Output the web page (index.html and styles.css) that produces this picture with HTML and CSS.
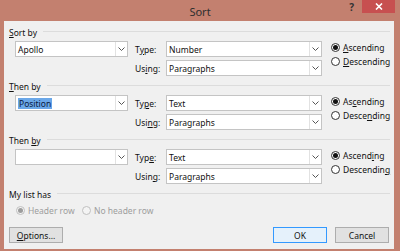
FILE: index.html
```html
<!DOCTYPE html>
<html lang="en">
<head>
    <meta charset="UTF-8">
    <title>Sort</title>
    <link rel="stylesheet" href="styles.css">
</head>
<body>
    <div class="window">
        <div class="titlebar">
            <span class="title">Sort</span>
            <div class="controls">
                <span class="help">?</span>
                <span class="close">
                    <svg width="8" height="7" viewBox="0 0 8 7"><path d="M1 0.5 L7 6.5 M7 0.5 L1 6.5" stroke="#fff" stroke-width="1.6"/></svg>
                </span>
            </div>
        </div>
        <div class="client">
            <div class="group">
                <div class="legend"><span><u>S</u>ort by</span></div>
                <div class="fields">
                    <div class="combo key"><span class="value">Apollo</span><span class="arrow"><svg width="7" height="4" viewBox="0 0 7 4"><path d="M0.5 0.5 L3.5 3.5 L6.5 0.5" fill="none" stroke="#555"/></svg></span></div>
                    <span class="label">T<u>y</u>pe:</span>
                    <div class="combo field"><span class="value">Number</span><span class="arrow"><svg width="7" height="4" viewBox="0 0 7 4"><path d="M0.5 0.5 L3.5 3.5 L6.5 0.5" fill="none" stroke="#555"/></svg></span></div>
                    <span class="label">Us<u>i</u>ng:</span>
                    <div class="combo field"><span class="value">Paragraphs</span><span class="arrow"><svg width="7" height="4" viewBox="0 0 7 4"><path d="M0.5 0.5 L3.5 3.5 L6.5 0.5" fill="none" stroke="#555"/></svg></span></div>
                    <div class="direction">
                        <label class="radio"><span class="dot on"></span><span><u>A</u>scending</span></label>
                        <label class="radio"><span class="dot"></span><span><u>D</u>escending</span></label>
                    </div>
                </div>
            </div>
            <div class="group">
                <div class="legend"><span><u>T</u>hen by</span></div>
                <div class="fields">
                    <div class="combo key"><span class="value"><span class="selected">Position</span></span><span class="arrow"><svg width="7" height="4" viewBox="0 0 7 4"><path d="M0.5 0.5 L3.5 3.5 L6.5 0.5" fill="none" stroke="#555"/></svg></span></div>
                    <span class="label">Ty<u>p</u>e:</span>
                    <div class="combo field"><span class="value">Text</span><span class="arrow"><svg width="7" height="4" viewBox="0 0 7 4"><path d="M0.5 0.5 L3.5 3.5 L6.5 0.5" fill="none" stroke="#555"/></svg></span></div>
                    <span class="label">Usi<u>n</u>g:</span>
                    <div class="combo field"><span class="value">Paragraphs</span><span class="arrow"><svg width="7" height="4" viewBox="0 0 7 4"><path d="M0.5 0.5 L3.5 3.5 L6.5 0.5" fill="none" stroke="#555"/></svg></span></div>
                    <div class="direction">
                        <label class="radio"><span class="dot on"></span><span>As<u>c</u>ending</span></label>
                        <label class="radio"><span class="dot"></span><span>Desce<u>n</u>ding</span></label>
                    </div>
                </div>
            </div>
            <div class="group">
                <div class="legend"><span>Then <u>b</u>y</span></div>
                <div class="fields">
                    <div class="combo key"><span class="value"></span><span class="arrow"><svg width="7" height="4" viewBox="0 0 7 4"><path d="M0.5 0.5 L3.5 3.5 L6.5 0.5" fill="none" stroke="#555"/></svg></span></div>
                    <span class="label">Typ<u>e</u>:</span>
                    <div class="combo field"><span class="value">Text</span><span class="arrow"><svg width="7" height="4" viewBox="0 0 7 4"><path d="M0.5 0.5 L3.5 3.5 L6.5 0.5" fill="none" stroke="#555"/></svg></span></div>
                    <span class="label">Usin<u>g</u>:</span>
                    <div class="combo field"><span class="value">Paragraphs</span><span class="arrow"><svg width="7" height="4" viewBox="0 0 7 4"><path d="M0.5 0.5 L3.5 3.5 L6.5 0.5" fill="none" stroke="#555"/></svg></span></div>
                    <div class="direction">
                        <label class="radio"><span class="dot on"></span><span>Ascend<u>i</u>ng</span></label>
                        <label class="radio"><span class="dot"></span><span>Descendin<u>g</u></span></label>
                    </div>
                </div>
            </div>
            <div class="group">
                <div class="legend"><span>My list has</span></div>
                <div class="header-opts">
                    <label class="radio disabled first"><span class="dot on"></span><span>Header row</span></label>
                    <label class="radio disabled"><span class="dot"></span><span>No header row</span></label>
                </div>
            </div>
            <div class="footer">
                <button class="btn"><u>O</u>ptions...</button>
                <span class="spacer"></span>
                <button class="btn default">OK</button>
                <button class="btn">Cancel</button>
            </div>
        </div>
    </div>
</body>
</html>
```

FILE: styles.css
```css
body {
    margin: 0;
    font-family: "Noto Sans", sans-serif;
    font-size: 8.5px;
    color: #111;
}
u {
    text-decoration-thickness: 1px;
    text-underline-offset: 1px;
}
.window {
    width: 400px;
    height: 251px;
    background-color: #c3806f;
    display: flex;
    flex-direction: column;
}
.titlebar {
    height: 21px;
    display: grid;
    grid-template-columns: 1fr auto 1fr;
    align-items: start;
}
.title {
    grid-column: 2;
    font-size: 11px;
    line-height: 23px;
    color: #2e2e2e;
}
.controls {
    grid-column: 3;
    justify-self: end;
    display: flex;
    margin-right: 5px;
}
.help {
    font-size: 10px;
    font-weight: bold;
    line-height: 14px;
    color: #333;
    margin-right: 8px;
}
.close {
    width: 33px;
    height: 13px;
    background-color: #c75050;
    display: flex;
    align-items: center;
    justify-content: center;
}
.client {
    flex: 1;
    margin: 0 6px 2px 4px;
    background-color: #f0f0f0;
    padding: 4px 4px 6px 5px;
    display: flex;
    flex-direction: column;
}
.group + .group {
    margin-top: 3px;
}
.legend {
    display: flex;
    align-items: center;
    height: 14px;
    margin-bottom: 2px;
}
.legend::after {
    content: "";
    flex: 1;
    border-top: 1px solid #dcdcdc;
    margin: -2px 0 0 6px;
}
.fields {
    display: grid;
    grid-template-columns: 113px 38px 156px auto;
    grid-template-rows: 16px 16px;
    row-gap: 3px;
    padding-left: 6px;
}
.combo {
    box-sizing: border-box;
    border: 1px solid #c4c4c4;
    background-color: #fff;
    display: flex;
    align-items: center;
}
.combo.key {
    grid-column: 1;
    grid-row: 1;
}
.combo.field {
    grid-column: 3;
}
.value {
    flex: 1;
    padding-left: 2px;
    white-space: nowrap;
    overflow: hidden;
}
.selected {
    background-color: #6aa7e8;
    color: #0a1a40;
    padding: 0 1px;
}
.arrow {
    width: 11px;
    align-self: stretch;
    border-left: 1px solid #e2e2e2;
    display: flex;
    align-items: center;
    justify-content: center;
}
.label {
    grid-column: 2;
    padding-left: 7px;
    display: flex;
    align-items: center;
}
.direction {
    grid-column: 4;
    grid-row: 1 / span 2;
    margin: -1px 0 0 9px;
    display: flex;
    flex-direction: column;
}
.radio {
    display: flex;
    align-items: center;
    gap: 3px;
    height: 14px;
}
.dot {
    box-sizing: border-box;
    width: 9px;
    height: 9px;
    border: 1px solid #333;
    border-radius: 50%;
    background-color: #fff;
    display: flex;
    align-items: center;
    justify-content: center;
}
.dot.on::after {
    content: "";
    width: 5px;
    height: 5px;
    border-radius: 50%;
    background-color: #111;
}
.header-opts {
    display: flex;
    padding-left: 7px;
}
.radio.first {
    width: 66px;
}
.radio.disabled {
    color: #9d9d9d;
}
.radio.disabled .dot {
    border-color: #c0c0c0;
    background-color: #f4f4f4;
}
.radio.disabled .dot.on::after {
    background-color: #9d9d9d;
}
.footer {
    margin-top: auto;
    display: flex;
    padding-right: 1px;
}
.spacer {
    flex: 1;
}
.btn {
    width: 54px;
    height: 16px;
    padding: 0;
    font-family: inherit;
    font-size: 8.5px;
    color: #111;
    background-color: #e1e1e1;
    border: 1px solid #adadad;
}
.btn.default {
    border-color: #3399ff;
    background-color: #e5f1fb;
    margin-right: 8px;
}
```
